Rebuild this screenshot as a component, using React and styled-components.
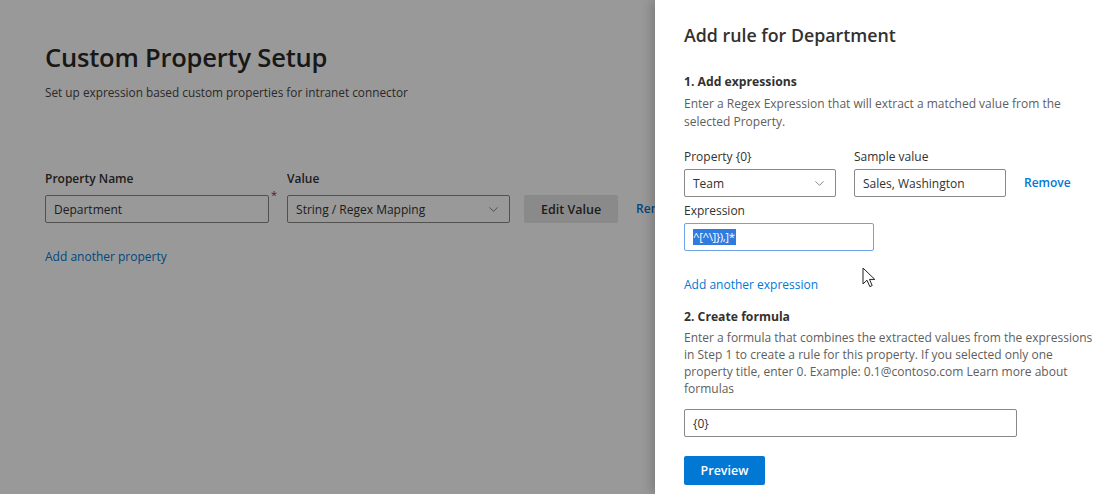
import React from "react";
import styled, { createGlobalStyle } from "styled-components";
import { ChevronDown } from "lucide-react";

const GlobalStyle = createGlobalStyle`
  html, body {
    margin: 0;
    padding: 0;
    background: #fff;
    font-family: "Open Sans", "Noto Sans", sans-serif;
    color: #323130;
  }
`;

const Page = styled.div`
  position: relative;
  width: 1119px;
  height: 494px;
  overflow: hidden;
  background: #fff;
`;

const Main = styled.div`
  padding: 39px 45px 0;
  display: flex;
  flex-direction: column;
`;

const Title = styled.h1`
  margin: 0;
  font-size: 25.5px;
  line-height: 36px;
  font-weight: 600;
  color: #292827;
  letter-spacing: -0.2px;
`;

const Subtitle = styled.p`
  margin: 8px 0 0;
  font-size: 11.8px;
  line-height: 18px;
  color: #484644;
`;

const FieldRow = styled.div`
  display: flex;
  align-items: flex-end;
  margin-top: 69px;
`;

const Field = styled.div`
  display: flex;
  flex-direction: column;
  gap: ${(p) => p.$gap || 7}px;
  margin-top: ${(p) => p.$top || 0}px;
`;

const Label = styled.label`
  font-size: 12px;
  line-height: 18px;
  font-weight: ${(p) => p.$weight || 600};
  color: #323130;
`;

const InputBox = styled.div`
  box-sizing: border-box;
  width: ${(p) => p.$w}px;
  height: 28px;
  margin-top: ${(p) => p.$top || 0}px;
  border: 1px solid ${(p) => (p.$focus ? "#6ea3e6" : "#8a8886")};
  border-radius: 2px;
  background: #fff;
  display: flex;
  align-items: center;
  justify-content: space-between;
  padding: 0 8px;
  font-size: 12px;
  color: #323130;
`;

const Required = styled.span`
  color: #a4262c;
  font-size: 11px;
  align-self: flex-start;
  margin: 20px 10px 0 2px;
  line-height: 10px;
`;

const DefaultButton = styled.button`
  margin-left: 14px;
  height: 28px;
  width: 94px;
  border: none;
  border-radius: 2px;
  background: #e8e7e6;
  font-family: inherit;
  font-size: 12.5px;
  font-weight: 600;
  color: #323130;
`;

const Link = styled.a`
  font-size: 12px;
  line-height: 18px;
  color: #0078d4;
  font-weight: ${(p) => p.$weight || 400};
  text-decoration: none;
  white-space: nowrap;
`;

const RowLink = styled(Link)`
  line-height: 28px;
  margin-left: ${(p) => p.$left || 0}px;
`;

const BlockLink = styled(Link)`
  margin-top: 25px;
`;

const Overlay = styled.div`
  position: absolute;
  inset: 0;
  background: rgba(0, 0, 0, 0.4);
`;

const Panel = styled.aside`
  position: absolute;
  top: 0;
  right: 0;
  bottom: 0;
  width: 464px;
  box-sizing: border-box;
  background: #fff;
  box-shadow: -4px 0 10px rgba(0, 0, 0, 0.18);
  padding: 22px 20px 0 29px;
  display: flex;
  flex-direction: column;
`;

const PanelTitle = styled.h2`
  margin: 0;
  font-size: 17.8px;
  line-height: 26px;
  font-weight: 600;
  color: #323130;
`;

const StepTitle = styled.h3`
  margin: ${(p) => p.$top}px 0 0;
  font-size: 12.2px;
  line-height: 18px;
  font-weight: 700;
  color: #323130;
`;

const Desc = styled.p`
  margin: ${(p) => p.$top || 4}px 0 0;
  font-size: 12px;
  line-height: ${(p) => p.$lh || 17}px;
  color: #605e5c;
  max-width: 412px;
`;

const PanelRow = styled.div`
  display: flex;
  align-items: flex-end;
  gap: 18px;
  margin-top: ${(p) => p.$top || 0}px;
`;

const Selected = styled.span`
  background: #2f7be0;
  color: #fff;
  line-height: 16px;
  font-size: 11.5px;
  letter-spacing: -0.4px;
  padding-right: 1px;
`;

const PrimaryButton = styled.button`
  margin-top: 19px;
  width: 81px;
  height: 29px;
  border: none;
  border-radius: 2px;
  background: #0078d4;
  color: #fff;
  font-family: inherit;
  font-size: 12.5px;
  font-weight: 600;
`;

const Cursor = styled.svg`
  position: absolute;
  left: 862px;
  top: 267px;
`;

const Chevron = () => <ChevronDown size={15} strokeWidth={1.2} color="#605e5c" />;

export default function App() {
  return (
    <Page>
      <GlobalStyle />
      <Main>
        <Title>Custom Property Setup</Title>
        <Subtitle>Set up expression based custom properties for intranet connector</Subtitle>
        <FieldRow>
          <Field>
            <Label>Property Name</Label>
            <InputBox $w={224}>Department</InputBox>
          </Field>
          <Required>*</Required>
          <Field>
            <Label>Value</Label>
            <InputBox $w={223}>
              String / Regex Mapping
              <Chevron />
            </InputBox>
          </Field>
          <DefaultButton>Edit Value</DefaultButton>
          <RowLink $weight={600} $left={18}>Remove</RowLink>
        </FieldRow>
        <BlockLink>Add another property</BlockLink>
      </Main>
      <Overlay />
      <Panel>
        <PanelTitle>Add rule for Department</PanelTitle>
        <StepTitle $top={25}>1. Add expressions</StepTitle>
        <Desc $lh={18}>Enter a Regex Expression that will extract a matched value from the selected Property.</Desc>
        <PanelRow $top={17}>
          <Field $gap={3}>
            <Label as="span" $weight={400}>Property {"{0}"}</Label>
            <InputBox $w={152}>
              Team
              <Chevron />
            </InputBox>
          </Field>
          <Field $gap={3}>
            <Label as="span" $weight={400}>Sample value</Label>
            <InputBox $w={152}>Sales, Washington</InputBox>
          </Field>
          <RowLink $weight={600}>Remove</RowLink>
        </PanelRow>
        <Field $gap={3} $top={5}>
          <Label as="span" $weight={400}>Expression</Label>
          <InputBox $w={190} $focus>
            <Selected>^[^\]}),]*</Selected>
          </InputBox>
        </Field>
        <BlockLink>Add another expression</BlockLink>
        <StepTitle $top={14}>2. Create formula</StepTitle>
        <Desc $top={3}>
          Enter a formula that combines the extracted values from the expressions in Step 1 to create a rule
          for this property. If you selected only one property title, enter 0. Example: 0.1@contoso.com Learn
          more about formulas
        </Desc>
        <InputBox $w={333} $top={12}>{"{0}"}</InputBox>
        <PrimaryButton>Preview</PrimaryButton>
      </Panel>
      <Cursor width="16" height="24" viewBox="0 0 16 24">
        <path d="M1 1 L1 17 L5 13.2 L7.8 19.6 L10.2 18.6 L7.5 12.4 L12.8 12.4 Z" fill="#fff" stroke="#222" strokeWidth="1" strokeLinejoin="round" />
      </Cursor>
    </Page>
  );
}
